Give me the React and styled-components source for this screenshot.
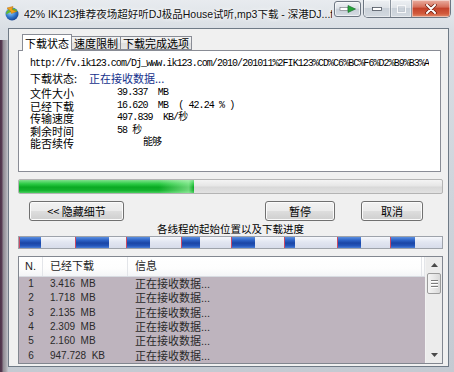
import React from 'react';
import styled, { createGlobalStyle } from 'styled-components';

const UI = `"Liberation Sans", "Noto Sans CJK SC", sans-serif`;
const CJK = `"Noto Sans CJK SC", "Liberation Sans", sans-serif`;
const MONO = `"Liberation Mono", "Noto Sans CJK SC", monospace`;

const GlobalStyle = createGlobalStyle`
  html, body { margin: 0; padding: 0; background: #fff; overflow: hidden; }
  #root { width: 454px; height: 372px; }
`;

const Window = styled.div`
  width: 454px;
  height: 372px;
  box-sizing: border-box;
  display: flex;
  flex-direction: column;
  background:
    linear-gradient(to right, #4b3247 0, #5a3d55 2px, #8d8790 3px, #a9a7ae 6px, #c4c6cc 8px) 0 40px / 8px 332px no-repeat,
    linear-gradient(180deg, #e8ebef 0%, #d9dee4 8%, #cfd5dc 50%, #c4cad2 100%);
`;

const TitleBar = styled.div`
  height: 28px;
  display: flex;
  align-items: flex-start;
  padding-left: 4px;
`;

const AppIcon = styled.svg`
  width: 16px;
  height: 16px;
  margin-top: 5px;
  flex-shrink: 0;
`;

const Title = styled.div`
  flex: 1;
  min-width: 0;
  margin: 6px 0 0 4px;
  font: 10.5px/16px ${UI};
  color: #111;
  white-space: nowrap;
  overflow: hidden;
  text-shadow: 0 0 6px #fff, 0 0 3px #fff;
`;

const ExtraButton = styled.div`
  width: 27px;
  height: 16px;
  margin: 1px 2px 0 2px;
  box-sizing: border-box;
  border: 1px solid #6d7682;
  border-radius: 3px;
  background: linear-gradient(180deg, #eef1f4 0%, #dde2e8 45%, #c7ced7 50%, #d6dce3 100%);
  box-shadow: inset 0 0 0 1px rgba(255, 255, 255, 0.6);
  display: flex;
  align-items: center;
  justify-content: center;
`;

const CaptionGroup = styled.div`
  display: flex;
  height: 18px;
  margin-right: 3px;
  box-sizing: border-box;
  border: 1px solid #6d7682;
  border-top: none;
  border-radius: 0 0 5px 5px;
  overflow: hidden;
`;

const CaptionButton = styled.div`
  width: ${({ $w }) => $w}px;
  display: flex;
  align-items: center;
  justify-content: center;
  box-shadow: inset 0 0 0 1px rgba(255, 255, 255, 0.45);
  border-left: ${({ $first }) => ($first ? 'none' : '1px solid #8a929c')};
  background: ${({ $close }) =>
    $close
      ? 'linear-gradient(180deg, #eab0a2 0%, #d7715c 40%, #c4432b 50%, #d25a3c 80%, #e28c6c 100%)'
      : 'linear-gradient(180deg, #edf0f3 0%, #dfe3e8 45%, #c9d0d8 50%, #d3d9e0 100%)'};
`;

const ClientFrame = styled.div`
  flex: 1;
  margin: 0 5px 5px 8px;
  border: 1px solid #6f7a86;
  background: #f0f0f0;
  display: flex;
  flex-direction: column;
  padding: 5px 5px 2px 9px;
  min-height: 0;
`;

const TabStrip = styled.div`
  height: 16px;
  display: flex;
  align-items: flex-end;
  padding-left: 4px;
  position: relative;
  z-index: 1;
`;

const Tab = styled.div`
  height: ${({ $active }) => ($active ? 17 : 14)}px;
  margin-bottom: ${({ $active }) => ($active ? -1 : 0)}px;
  margin-left: ${({ $active }) => ($active ? 0 : -1)}px;
  box-sizing: border-box;
  padding: 0 2px;
  border: 1px solid #898c95;
  border-bottom: ${({ $active }) => ($active ? 'none' : '1px solid #898c95')};
  background: ${({ $active }) => ($active ? '#fff' : 'linear-gradient(180deg, #f3f3f3 0%, #ebebeb 50%, #dedede 51%, #e6e6e6 100%)')};
  font: 11px/1 ${CJK};
  color: #000;
  display: flex;
  align-items: center;
  white-space: nowrap;
  &:first-child { margin-left: 0; }
`;

const Panel = styled.div`
  height: 122px;
  box-sizing: border-box;
  margin-right: 2px;
  border: 1px solid #898c95;
  background: #fff;
  padding: 6px 11px;
`;

const UrlLine = styled.div`
  height: 13px;
  font: 10px/13px ${MONO};
  letter-spacing: -0.95px;
  white-space: nowrap;
  overflow: hidden;
  color: #000;
`;

const StatusLine = styled.div`
  margin-top: 2px;
  display: flex;
  gap: 12px;
  font: 11px/13px ${CJK};
  color: #000;
`;

const StatusValue = styled.span`
  color: #15318c;
`;

const InfoGrid = styled.div`
  margin-top: 2px;
  display: grid;
  grid-template-columns: 87px 1fr;
  grid-auto-rows: 12.5px;
  align-items: center;
`;

const InfoLabel = styled.div`
  font: 11px/12.5px ${CJK};
  color: #000;
`;

const InfoValue = styled.div`
  font: 10px/12.5px ${MONO};
  letter-spacing: -0.9px;
  white-space: pre;
  color: #000;
  padding-left: ${({ $indent }) => $indent || 0}px;
`;

const Progress = styled.div`
  margin-top: 7px;
  height: 15px;
  box-sizing: border-box;
  border: 1px solid #b4b4b4;
  border-radius: 2px;
  background: linear-gradient(180deg, #f4f4f4 0%, #e6e6e6 45%, #d8d8d8 55%, #e2e2e2 100%);
  overflow: hidden;
`;

const ProgressFill = styled.div`
  height: 100%;
  background:
    linear-gradient(90deg, rgba(255, 255, 255, 0) 80%, rgba(200, 255, 200, 0.5) 97%, rgba(255, 255, 255, 0) 100%),
    linear-gradient(180deg, #7fe08c 0%, #2ccb45 30%, #0aa923 55%, #14b22d 80%, #48cf5e 100%);
`;

const ButtonRow = styled.div`
  margin-top: 7px;
  height: 20px;
  display: flex;
  gap: 26px;
  padding: 0 20px 0 11px;
`;

const Button = styled.div`
  width: ${({ $w }) => $w}px;
  height: 20px;
  box-sizing: border-box;
  margin-right: ${({ $pushRight }) => ($pushRight ? 'auto' : '0')};
  border: 1px solid #707070;
  border-radius: 3px;
  background: linear-gradient(180deg, #f2f2f2 0%, #ebebeb 48%, #dddddd 52%, #cfcfcf 100%);
  box-shadow: inset 0 0 0 1px #fbfbfb;
  font: 11px/18px ${CJK};
  color: #000;
  text-align: center;
  white-space: pre;
`;

const Caption = styled.div`
  height: 15px;
  font: 10.5px/15px ${CJK};
  text-align: center;
  color: #000;
`;

const ThreadBar = styled.div`
  height: 13px;
  box-sizing: border-box;
  border: 1px solid #9ea3ab;
  display: flex;
  background: #e3e7f1;
`;

const Segment = styled.div`
  flex-basis: 0;
  border-left: 1px solid #c84a66;
  background: linear-gradient(180deg, #f6f8fc 0%, #e2e6f1 45%, #d7dcea 100%);
  display: flex;
`;

const SegmentDone = styled.div`
  height: 100%;
  background: linear-gradient(180deg, #5b8fe0 0%, #2d62c6 30%, #1a45a5 55%, #2456bb 80%, #4d7fd6 100%);
`;

const List = styled.div`
  margin-top: 7px;
  height: 108px;
  box-sizing: border-box;
  border: 1px solid #828790;
  display: flex;
  background: #fff;
`;

const ListBody = styled.div`
  flex: 1;
  min-width: 0;
  display: flex;
  flex-direction: column;
`;

const ListHeader = styled.div`
  height: 20px;
  box-sizing: border-box;
  display: grid;
  grid-template-columns: 24px 85px 294px 1fr;
  background: linear-gradient(180deg, #ffffff 0%, #fdfdfd 60%, #f4f5f7 100%);
  border-bottom: 1px solid #d8dce2;
`;

const HeadCell = styled.div`
  font: 11px/19px ${UI};
  color: #1e1e1e;
  padding-left: ${({ $pad }) => $pad}px;
  border-right: 1px solid #e3e5e9;
  white-space: nowrap;
`;

const Rows = styled.div`
  flex: 1;
  overflow: hidden;
  background: #beb4be;
`;

const Row = styled.div`
  height: 14.33px;
  display: grid;
  grid-template-columns: 24px 85px 1fr;
  align-items: center;
  font: 10px/14px ${UI};
  color: #2a2a2a;
`;

const Cell = styled.div`
  padding-left: ${({ $pad }) => $pad}px;
  text-align: ${({ $center }) => ($center ? 'center' : 'left')};
  white-space: pre;
  font-size: ${({ $cjk }) => ($cjk ? '11px' : 'inherit')};
`;

const ScrollBar = styled.div`
  width: 16px;
  display: flex;
  flex-direction: column;
  background: #ececec;
  border-left: 1px solid #f2f2f2;
`;

const ScrollArrow = styled.div`
  height: 16px;
  display: flex;
  align-items: center;
  justify-content: center;
`;

const Thumb = styled.div`
  height: 21px;
  margin: 0 1px;
  box-sizing: border-box;
  border: 1px solid #9c9c9c;
  border-radius: 2px;
  background: linear-gradient(90deg, #f4f4f4 0%, #e8e8e8 50%, #d9d9d9 100%);
  display: flex;
  flex-direction: column;
  align-items: center;
  justify-content: center;
  gap: 2px;
`;

const Grip = styled.div`
  width: 7px;
  height: 1px;
  background: #7c7c7c;
  box-shadow: 0 1px 0 #fff;
`;

const Spacer = styled.div`
  flex: 1;
`;

// span/done: pixel widths of each thread's stretch and its downloaded part in the bar
const threads = [
  { n: 1, size: '3.416  MB', span: 56, done: 21 },
  { n: 2, size: '1.718  MB', span: 52, done: 34 },
  { n: 3, size: '2.135  MB', span: 55, done: 23 },
  { n: 4, size: '2.309  MB', span: 50, done: 18 },
  { n: 5, size: '2.160  MB', span: 53, done: 24 },
  { n: 6, size: '947.728  KB', span: 53, done: 10 },
  { n: 7, span: 54, done: 24 },
  { n: 8, span: 52, done: 24 },
];

const info = [
  ['文件大小', '39.337  MB'],
  ['已经下载', '16.620  MB  ( 42.24 % )'],
  ['传输速度', '497.839  KB/秒'],
  ['剩余时间', '58 秒'],
  ['能否续传', '能够', 26],
];

const App = () => {
  return (
    <>
      <GlobalStyle />
      <Window>
        <TitleBar>
          <AppIcon viewBox="0 0 16 16">
            <defs>
              <radialGradient id="globe" cx="0.4" cy="0.35" r="0.7">
                <stop offset="0" stopColor="#9fd8ff" />
                <stop offset="0.6" stopColor="#2f74c8" />
                <stop offset="1" stopColor="#173f8a" />
              </radialGradient>
            </defs>
            <circle cx="8" cy="9" r="6.5" fill="url(#globe)" />
            <path d="M2.2 7.5 C4 4 8 2.5 12 4 L13.6 7 C10 6 6 7 2.2 9.5 Z" fill="#63b82e" />
            <path d="M3 3 L9 1.5 L8 4.5 L12.5 6.5 L7.5 8.5 L6.5 6 Z" fill="#f2a21c" stroke="#b86d08" strokeWidth="0.5" />
          </AppIcon>
          <Title>42% IK123推荐夜场超好听DJ极品House试听,mp3下载 - 深港DJ...fl</Title>
          <ExtraButton>
            <svg width="18" height="8" viewBox="0 0 18 8">
              <rect x="1" y="2.5" width="8" height="3" fill="#fff" stroke="#6b6f75" strokeWidth="0.6" />
              <path d="M9 0.5 L16.5 4 L9 7.5 Z" fill="#27a53a" stroke="#16662a" strokeWidth="0.6" />
            </svg>
          </ExtraButton>
          <CaptionGroup>
            <CaptionButton $w={26} $first>
              <svg width="10" height="4" viewBox="0 0 10 4">
                <rect x="0.5" y="0.5" width="9" height="3" fill="#fff" stroke="#4b525c" strokeWidth="0.8" />
              </svg>
            </CaptionButton>
            <CaptionButton $w={20}>
              <svg width="9" height="8" viewBox="0 0 9 8">
                <rect x="0.5" y="0.5" width="8" height="7" fill="none" stroke="#f6f7f9" strokeWidth="1" />
                <rect x="1.5" y="2" width="6" height="4.5" fill="none" stroke="#b9c0c9" strokeWidth="0.6" />
              </svg>
            </CaptionButton>
            <CaptionButton $w={38} $close>
              <svg width="12" height="10" viewBox="0 0 12 10">
                <path d="M2 1 L10 9 M10 1 L2 9" stroke="#6b1d10" strokeWidth="3.4" strokeLinecap="round" />
                <path d="M2 1 L10 9 M10 1 L2 9" stroke="#fff" strokeWidth="2" strokeLinecap="round" />
              </svg>
            </CaptionButton>
          </CaptionGroup>
        </TitleBar>

        <ClientFrame>
          <TabStrip>
            <Tab $active>下载状态</Tab>
            <Tab>速度限制</Tab>
            <Tab>下载完成选项</Tab>
          </TabStrip>
          <Panel>
            <UrlLine>http://fv.ik123.com/Dj_www.ik123.com/2010/201011%2FIK123%CD%C6%BC%F6%D2%B9%B3%A</UrlLine>
            <StatusLine>
              <span>下载状态:</span>
              <StatusValue>正在接收数据...</StatusValue>
            </StatusLine>
            <InfoGrid>
              {info.map(([label, value, indent]) => (
                <React.Fragment key={label}>
                  <InfoLabel>{label}</InfoLabel>
                  <InfoValue $indent={indent}>{value}</InfoValue>
                </React.Fragment>
              ))}
            </InfoGrid>
          </Panel>

          <Progress>
            <ProgressFill style={{ width: '41.3%' }} />
          </Progress>

          <ButtonRow>
            <Button $w={95} $pushRight>{'<< 隐藏细节'}</Button>
            <Button $w={70}>暂停</Button>
            <Button $w={62}>取消</Button>
          </ButtonRow>

          <Caption>各线程的起始位置以及下载进度</Caption>
          <ThreadBar>
            {threads.map((t) => (
              <Segment key={t.n} style={{ flexGrow: t.span }}>
                <SegmentDone style={{ width: `${(t.done / t.span) * 100}%` }} />
              </Segment>
            ))}
          </ThreadBar>

          <List>
            <ListBody>
              <ListHeader>
                <HeadCell $pad={6}>N.</HeadCell>
                <HeadCell $pad={7}>已经下载</HeadCell>
                <HeadCell $pad={7}>信息</HeadCell>
                <HeadCell $pad={0} />
              </ListHeader>
              <Rows>
                {threads.filter((t) => t.size).map((t) => (
                  <Row key={t.n}>
                    <Cell $center>{t.n}</Cell>
                    <Cell $pad={7}>{t.size}</Cell>
                    <Cell $pad={7} $cjk>正在接收数据...</Cell>
                  </Row>
                ))}
              </Rows>
            </ListBody>
            <ScrollBar>
              <ScrollArrow>
                <svg width="7" height="4" viewBox="0 0 7 4"><path d="M0 4 L3.5 0 L7 4 Z" fill="#4a4a4a" /></svg>
              </ScrollArrow>
              <Thumb>
                <Grip />
                <Grip />
                <Grip />
              </Thumb>
              <Spacer />
              <ScrollArrow>
                <svg width="7" height="4" viewBox="0 0 7 4"><path d="M0 0 L7 0 L3.5 4 Z" fill="#4a4a4a" /></svg>
              </ScrollArrow>
            </ScrollBar>
          </List>
        </ClientFrame>
      </Window>
    </>
  );
};

export default App;
